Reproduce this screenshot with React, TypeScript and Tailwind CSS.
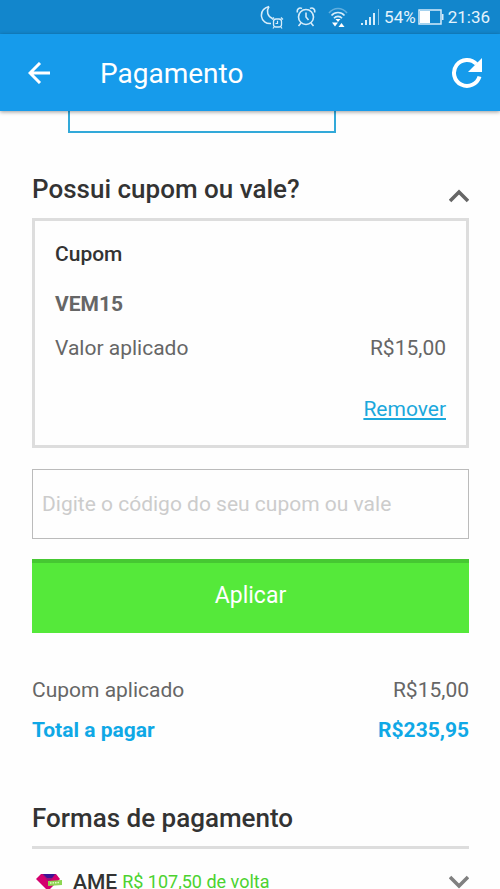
import { useState } from "react";

function MoonIcon() {
  return (
    <svg width="24" height="24" viewBox="0 0 24 24" fill="none" stroke="#d6ecfa" strokeWidth="1.500" aria-hidden="true">
      <path d="M9 1.500C3.500 3 1 7 1.500 11.500c.6 4.500 4.500 7.500 9.500 7" />
      <path d="M9 1.500C6 6 7.500 11.500 12.500 13.500" />
      <rect x="13.500" y="14" width="8" height="8" rx="2.500" strokeWidth="1.300" />
      <path d="M17.500 15.800v2.700h-2M12 14.500l2-2M23 14.500l-2-2M14 22l-1 1.500M21 22l1 1.500" strokeWidth="1.200" />
    </svg>
  );
}

function AlarmIcon() {
  return (
    <svg width="20" height="22" viewBox="0 0 20 22" fill="none" stroke="#d6ecfa" strokeWidth="1.600" aria-hidden="true">
      <circle cx="10" cy="11" r="7.500" />
      <path d="M10 6.500V11l2.500 3M1.500 6.500C.5 3.500 3 1 6 2.500M18.500 6.500C19.500 3.500 17 1 14 2.500M5 17l-2.500 3M15 17l2.500 3" />
    </svg>
  );
}

function WifiIcon() {
  return (
    <svg width="20" height="22" viewBox="0 0 20 22" fill="none" stroke="#d6ecfa" strokeWidth="1.600" aria-hidden="true">
      <path d="M1 7C6 1 14 1 19 7" opacity=".4" />
      <path d="M3.500 9.500C7 5.500 13 5.500 16.500 9.500M6 12.200c2-2.400 6-2.400 8 0" />
      <path d="M7.500 13h5L10 16zM4 16.500h6L7 20.500zM10.500 21h6l-3-4z" fill="#fff" stroke="none" />
    </svg>
  );
}

function SignalIcon() {
  return (
    <svg width="20" height="18" viewBox="0 0 20 18" fill="#d6ecfa" aria-hidden="true">
      <path d="M1 15h2v2H1zM5 12h2v5H5zM9 9h2v8H9zM13 5h2v12h-2z" />
      <path d="M18 1h1v16h-1z" opacity=".6" />
    </svg>
  );
}

function BatteryIcon() {
  return (
    <svg width="26" height="16" viewBox="0 0 26 16" aria-hidden="true">
      <rect x="1" y="1" width="22" height="14" fill="none" stroke="#d6ecfa" strokeWidth="1.500" />
      <path d="M2 2h10v12H2z" fill="#fff" />
      <path d="M24 5h1.500v6H24z" fill="#d6ecfa" />
    </svg>
  );
}

function Chevron({ up = false }: { up?: boolean }) {
  return (
    <svg width="20" height="14" viewBox="0 0 20 14" fill="none" strokeWidth="3.600" aria-hidden="true">
      {up ? <path d="M1 12l9-9 9 9" stroke="#666" /> : <path d="M1 2l9 9 9-9" stroke="#808080" />}
    </svg>
  );
}

function AmeLogo() {
  return (
    <svg width="28" height="18" viewBox="0 0 28 18" aria-hidden="true">
      <path d="M5 1h15l4 5-12 12L0 6z" fill="#d4006e" />
      <path d="M6 1h4l4 4 5-4h1l-5 6-3 1z" fill="#a00f78" />
      <path d="M7 1h12l-3 4h-5z" fill="#3c1496" />
      <path d="M12 8l14-1v5l-14 1z" fill="#8ed653" />
      <path d="M14 10l10-.5" stroke="#e4f7c8" strokeWidth="1.500" strokeDasharray="1.500 1" />
    </svg>
  );
}

export default function App() {
  const [code, setCode] = useState("");

  return (
    <div className="flex h-screen flex-col overflow-hidden bg-[#fefefe] font-[Roboto,sans-serif] text-[21px] leading-6 text-[#666]">
      <div className="flex h-[34px] shrink-0 items-center justify-end bg-[#1286cc] pr-2.5 text-[17px] text-[#e4f3fc]">
        <span className="mr-3"><MoonIcon /></span>
        <span className="mr-3"><AlarmIcon /></span>
        <span className="mr-3"><WifiIcon /></span>
        <span className="mr-1"><SignalIcon /></span>
        <span className="mr-0.5">54%</span>
        <span className="mr-1"><BatteryIcon /></span>
        <time>21:36</time>
      </div>

      <header className="z-10 flex h-[77px] shrink-0 items-center bg-[#169beb] pr-[17px] pl-7 text-white shadow-[0_1px_4px_rgba(0,0,0,0.4)]">
        <button type="button" aria-label="Voltar">
          <svg width="22" height="22" viewBox="0 0 22 22" fill="none" stroke="currentColor" strokeWidth="3" aria-hidden="true">
            <path d="M22 11H2M12 1L2 11l10 10" />
          </svg>
        </button>
        <h1 className="ml-[50px] flex-1 pt-0.5 text-[28px] leading-8">Pagamento</h1>
        <button type="button" aria-label="Atualizar">
          <svg width="32" height="32" viewBox="0 0 32 32" aria-hidden="true">
            <path d="M28.500 19.500A13 13 0 1 1 25.500 7" fill="none" stroke="currentColor" strokeWidth="4" />
            <path d="M31 1v14H17z" fill="currentColor" />
          </svg>
        </button>
      </header>

      <main className="min-h-0 flex-1 overflow-y-auto pr-[31px] pl-8 [scrollbar-width:none]">
        <div className="mr-[133px] ml-9 h-[22px] border-2 border-t-0 border-[#32a9d9]" />

        <section>
          <div className="mt-10 flex h-[45px] items-start justify-between">
            <h2 className="text-[26px] leading-8 font-medium text-[#333]">Possui cupom ou vale?</h2>
            <button type="button" aria-label="Recolher cupom" className="mt-4">
              <Chevron up />
            </button>
          </div>

          <div className="border-3 border-[#ddd] px-5 pt-[21px] pb-6">
            <h3 className="font-medium text-[#333]">Cupom</h3>
            <p className="mt-[26px] font-bold">VEM15</p>
            <dl className="mt-5 flex justify-between">
              <dt>Valor aplicado</dt>
              <dd>R$15,00</dd>
            </dl>
            <div className="mt-[37px] flex justify-end">
              <a href="#remover" className="text-[#1ba8dc] underline">Remover</a>
            </div>
          </div>

          <form className="mt-[21px]" onSubmit={(event) => event.preventDefault()}>
            <input
              type="text"
              aria-label="Código do cupom ou vale"
              placeholder="Digite o código do seu cupom ou vale"
              value={code}
              onChange={(event) => setCode(event.target.value)}
              className="block h-[70px] w-full border border-[#bbb] px-[9px] placeholder:text-[#ccc]"
            />
            <button type="submit" className="mt-5 block h-[74px] w-full border-t-4 border-[#46c832] bg-[#55e93a] pb-1 text-[23px] leading-6 text-white">
              Aplicar
            </button>
          </form>

          <dl className="mt-[45px] grid grid-cols-[1fr_auto] gap-y-4">
            <dt>Cupom aplicado</dt>
            <dd className="text-right">R$15,00</dd>
            <dt className="font-bold text-[#0fa8e6]">Total a pagar</dt>
            <dd className="text-right font-bold text-[#0fa8e6]">R$235,95</dd>
          </dl>
        </section>

        <section className="mt-[60px]">
          <h2 className="border-b-3 border-[#ddd] pb-3 text-[26px] leading-8 font-medium text-[#333]">Formas de pagamento</h2>
          <button type="button" className="mt-[21px] flex w-full items-center text-left">
            <span className="ml-1"><AmeLogo /></span>
            <span className="ml-[9px] font-medium text-[#333]">AME</span>
            <span className="ml-[5px] flex-1 text-lg leading-6 text-[#4bd22f]">R$ 107,50 de volta</span>
            <Chevron />
          </button>
        </section>
      </main>
    </div>
  );
}
